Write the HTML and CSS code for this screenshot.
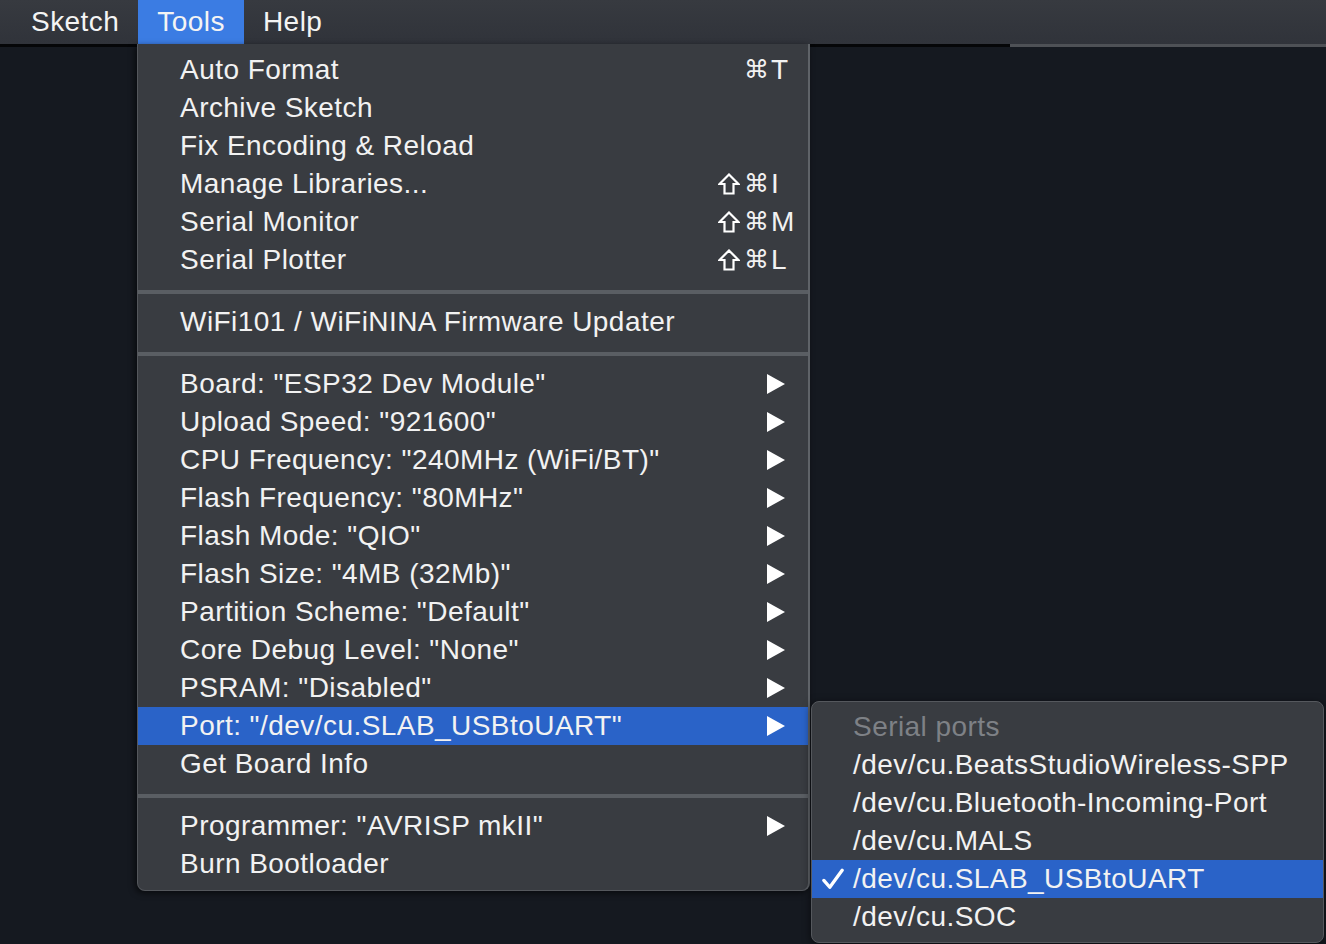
FILE: index.html
```html
<!DOCTYPE html>
<html>
<head>
<meta charset="utf-8">
<link rel="stylesheet" href="styles.css">
</head>
<body>
<div class="menubar">
  <span class="mb-item">Sketch</span>
  <span class="mb-item active">Tools</span>
  <span class="mb-item">Help</span>
</div>
<div class="desk">
  <div class="desk-line"><span class="dl-dark"></span><span class="dl-light"></span></div>
</div>

<div class="menu main-menu">
  <div class="row"><span class="label">Auto Format</span><span class="mods">⌘</span><span class="key">T</span></div>
  <div class="row"><span class="label">Archive Sketch</span></div>
  <div class="row"><span class="label">Fix Encoding &amp; Reload</span></div>
  <div class="row"><span class="label">Manage Libraries...</span><span class="mods"><svg class="shift" viewBox="0 0 22 22"><path d="M11 1.5 L20.5 11 H15.5 V20.5 H6.5 V11 H1.5 Z"/></svg>⌘</span><span class="key">I</span></div>
  <div class="row"><span class="label">Serial Monitor</span><span class="mods"><svg class="shift" viewBox="0 0 22 22"><path d="M11 1.5 L20.5 11 H15.5 V20.5 H6.5 V11 H1.5 Z"/></svg>⌘</span><span class="key">M</span></div>
  <div class="row"><span class="label">Serial Plotter</span><span class="mods"><svg class="shift" viewBox="0 0 22 22"><path d="M11 1.5 L20.5 11 H15.5 V20.5 H6.5 V11 H1.5 Z"/></svg>⌘</span><span class="key">L</span></div>
  <div class="sep"></div>
  <div class="row"><span class="label">WiFi101 / WiFiNINA Firmware Updater</span></div>
  <div class="sep"></div>
  <div class="row"><span class="label">Board: "ESP32 Dev Module"</span><span class="key"><svg class="arrow" viewBox="0 0 18 20"><polygon points="0,0 18,10 0,20"/></svg></span></div>
  <div class="row"><span class="label">Upload Speed: "921600"</span><span class="key"><svg class="arrow" viewBox="0 0 18 20"><polygon points="0,0 18,10 0,20"/></svg></span></div>
  <div class="row"><span class="label">CPU Frequency: "240MHz (WiFi/BT)"</span><span class="key"><svg class="arrow" viewBox="0 0 18 20"><polygon points="0,0 18,10 0,20"/></svg></span></div>
  <div class="row"><span class="label">Flash Frequency: "80MHz"</span><span class="key"><svg class="arrow" viewBox="0 0 18 20"><polygon points="0,0 18,10 0,20"/></svg></span></div>
  <div class="row"><span class="label">Flash Mode: "QIO"</span><span class="key"><svg class="arrow" viewBox="0 0 18 20"><polygon points="0,0 18,10 0,20"/></svg></span></div>
  <div class="row"><span class="label">Flash Size: "4MB (32Mb)"</span><span class="key"><svg class="arrow" viewBox="0 0 18 20"><polygon points="0,0 18,10 0,20"/></svg></span></div>
  <div class="row"><span class="label">Partition Scheme: "Default"</span><span class="key"><svg class="arrow" viewBox="0 0 18 20"><polygon points="0,0 18,10 0,20"/></svg></span></div>
  <div class="row"><span class="label">Core Debug Level: "None"</span><span class="key"><svg class="arrow" viewBox="0 0 18 20"><polygon points="0,0 18,10 0,20"/></svg></span></div>
  <div class="row"><span class="label">PSRAM: "Disabled"</span><span class="key"><svg class="arrow" viewBox="0 0 18 20"><polygon points="0,0 18,10 0,20"/></svg></span></div>
  <div class="row hl"><span class="label">Port: "/dev/cu.SLAB_USBtoUART"</span><span class="key"><svg class="arrow" viewBox="0 0 18 20"><polygon points="0,0 18,10 0,20"/></svg></span></div>
  <div class="row"><span class="label">Get Board Info</span></div>
  <div class="sep"></div>
  <div class="row"><span class="label">Programmer: "AVRISP mkII"</span><span class="key"><svg class="arrow" viewBox="0 0 18 20"><polygon points="0,0 18,10 0,20"/></svg></span></div>
  <div class="row"><span class="label">Burn Bootloader</span></div>
</div>

<div class="menu sub-menu">
  <div class="row"><span class="check"></span><span class="label dim">Serial ports</span></div>
  <div class="row"><span class="check"></span><span class="label">/dev/cu.BeatsStudioWireless-SPP</span></div>
  <div class="row"><span class="check"></span><span class="label">/dev/cu.Bluetooth-Incoming-Port</span></div>
  <div class="row"><span class="check"></span><span class="label">/dev/cu.MALS</span></div>
  <div class="row hl"><span class="check"><svg viewBox="0 0 24 24"><path d="M2 13.5 L8.5 21 L22 2.5" fill="none" stroke="#fff" stroke-width="3.6" stroke-linecap="round" stroke-linejoin="round"/></svg></span><span class="label">/dev/cu.SLAB_USBtoUART</span></div>
  <div class="row"><span class="check"></span><span class="label">/dev/cu.SOC</span></div>
</div>
</body>
</html>
```

FILE: styles.css
```css
html, body {
  margin: 0;
  padding: 0;
  width: 1326px;
  height: 944px;
  overflow: hidden;
  background: #151920;
  font-family: "Liberation Sans", Arial, "DejaVu Sans", sans-serif;
  color: #f2f2f2;
}

.menubar {
  display: flex;
  height: 44px;
  background: linear-gradient(#373a40, #30333a);
  padding-left: 12px;
}

.mb-item {
  font-size: 28px;
  letter-spacing: 0.45px;
  line-height: 44px;
  padding: 0 19px;
  color: #f4f4f4;
}

.mb-item.active {
  background: #3b7ce3;
}

.desk-line {
  display: flex;
  height: 3px;
}

.dl-dark {
  width: 1010px;
  background: #050608;
}

.dl-light {
  flex: 1;
  background: #4e5156;
}

.menu {
  position: absolute;
  background: #393c41;
  box-sizing: border-box;
}

.main-menu {
  left: 137px;
  top: 44px;
  width: 673px;
  padding: 7px 0 7px 0;
  border-left: 1px solid #54575c;
  border-right: 2px solid #5f6368;
  border-bottom: 1px solid #55585d;
  border-radius: 0 0 8px 8px;
  box-shadow: -2px 2px 6px rgba(0, 0, 0, 0.6);
}

.row {
  display: flex;
  align-items: center;
  height: 38px;
  font-size: 28px;
  letter-spacing: 0.45px;
  line-height: 38px;
  white-space: nowrap;
}

.main-menu .row {
  padding-left: 42px;
}

.row .label {
  flex: 1;
}

.row.hl {
  background: #2a63c8;
}

.mods {
  display: flex;
  align-items: center;
  font-family: "DejaVu Sans", sans-serif;
  font-size: 25px;
  letter-spacing: 0;
  margin-right: 2px;
}

.shift {
  width: 22px;
  height: 22px;
  fill: none;
  stroke: #ffffff;
  stroke-width: 2.2;
  stroke-linejoin: miter;
  margin-right: 4px;
}

.key {
  width: 37px;
  box-sizing: border-box;
  display: flex;
  align-items: center;
}

.arrow {
  width: 18px;
  height: 20px;
  fill: #ffffff;
  margin-left: -4px;
}

.sep {
  height: 4px;
  margin: 11px 0 9px 0;
  background: #5a5e63;
}

.sub-menu {
  left: 811px;
  top: 701px;
  width: 513px;
  height: 242px;
  padding-top: 6px;
  border: 1px solid #55585d;
  border-radius: 8px;
  overflow: hidden;
  box-shadow: 0 2px 8px rgba(0, 0, 0, 0.6);
}

.sub-menu .row {
  padding-left: 10px;
}

.check {
  width: 31px;
  height: 24px;
  display: flex;
  align-items: center;
}

.check svg {
  width: 22px;
  height: 22px;
}

.dim {
  color: #7e8186;
}
```
